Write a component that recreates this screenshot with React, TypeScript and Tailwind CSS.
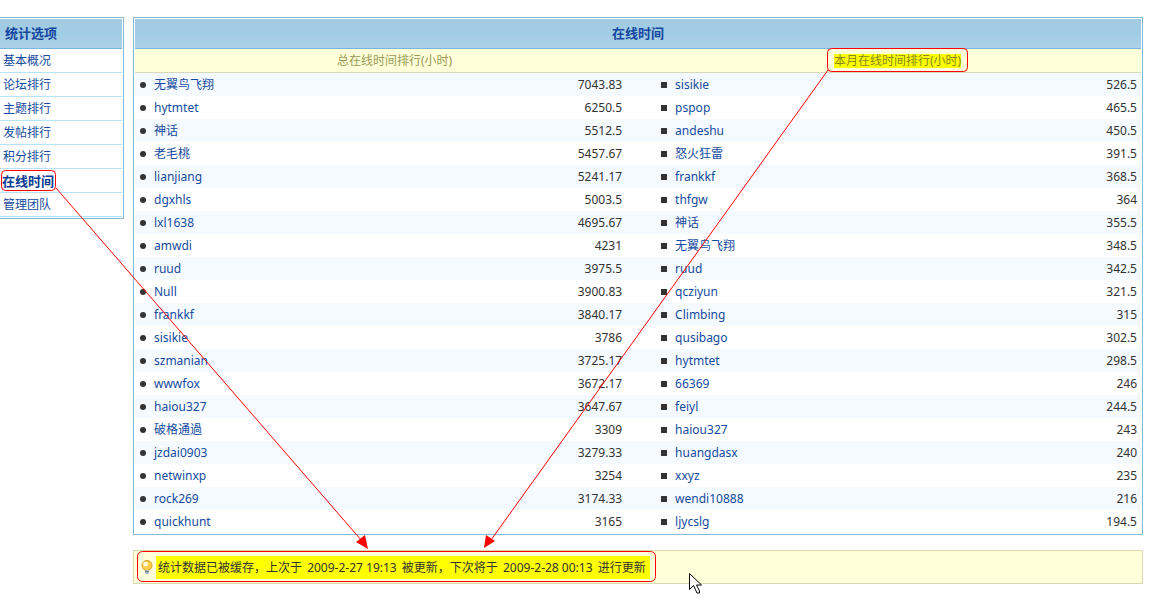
import React from 'react';

interface RankEntry {
  name: string;
  hours: string;
}

const menuItems = ['基本概况', '论坛排行', '主题排行', '发帖排行', '积分排行', '在线时间', '管理团队'];
const activeItem = '在线时间';

const totalRank: RankEntry[] = [
  { name: '无翼鸟飞翔', hours: '7043.83' },
  { name: 'hytmtet', hours: '6250.5' },
  { name: '神话', hours: '5512.5' },
  { name: '老毛桃', hours: '5457.67' },
  { name: 'lianjiang', hours: '5241.17' },
  { name: 'dgxhls', hours: '5003.5' },
  { name: 'lxl1638', hours: '4695.67' },
  { name: 'amwdi', hours: '4231' },
  { name: 'ruud', hours: '3975.5' },
  { name: 'Null', hours: '3900.83' },
  { name: 'frankkf', hours: '3840.17' },
  { name: 'sisikie', hours: '3786' },
  { name: 'szmanian', hours: '3725.17' },
  { name: 'wwwfox', hours: '3672.17' },
  { name: 'haiou327', hours: '3647.67' },
  { name: '破格通過', hours: '3309' },
  { name: 'jzdai0903', hours: '3279.33' },
  { name: 'netwinxp', hours: '3254' },
  { name: 'rock269', hours: '3174.33' },
  { name: 'quickhunt', hours: '3165' },
];

const monthRank: RankEntry[] = [
  { name: 'sisikie', hours: '526.5' },
  { name: 'pspop', hours: '465.5' },
  { name: 'andeshu', hours: '450.5' },
  { name: '怒火狂雷', hours: '391.5' },
  { name: 'frankkf', hours: '368.5' },
  { name: 'thfgw', hours: '364' },
  { name: '神话', hours: '355.5' },
  { name: '无翼鸟飞翔', hours: '348.5' },
  { name: 'ruud', hours: '342.5' },
  { name: 'qcziyun', hours: '321.5' },
  { name: 'Climbing', hours: '315' },
  { name: 'qusibago', hours: '302.5' },
  { name: 'hytmtet', hours: '298.5' },
  { name: '66369', hours: '246' },
  { name: 'feiyl', hours: '244.5' },
  { name: 'haiou327', hours: '243' },
  { name: 'huangdasx', hours: '240' },
  { name: 'xxyz', hours: '235' },
  { name: 'wendi10888', hours: '216' },
  { name: 'ljycslg', hours: '194.5' },
];

const Sidebar: React.FC = () => (
  <nav className="w-[124px] shrink-0 border border-l-0 border-[#86b9d6] pt-px pr-px pb-px">
    <h2 className="h-[30px] border-b border-[#7ab6dc] bg-linear-to-b from-[#a3cbe2] via-[#a0cde4] to-[#aed1e8] pl-[5px] text-[13px] leading-7 font-bold text-[#1546a0]">
      统计选项
    </h2>
    <ul>
      {menuItems.map(item => (
        <li key={item} className="h-6 border-b border-[#b6e2fa] leading-6">
          <a
            href="#"
            className={item === activeItem ? 'pl-[2px] text-[13px] font-bold text-[#0b3b94]' : 'pl-[3px] text-[#154ba0]'}
          >
            {item}
          </a>
        </li>
      ))}
    </ul>
  </nav>
);

const RankTable: React.FC = () => (
  <div className="border border-[#86b9d6] px-px pt-px pb-px">
    <table className="w-full table-fixed border-separate border-spacing-0">
      <colgroup>
        <col className="w-[40%]" />
        <col className="w-[12%]" />
        <col className="w-[36%]" />
        <col className="w-[12%]" />
      </colgroup>
      <thead>
        <tr>
          <th
            colSpan={4}
            className="h-[30px] border-b border-[#7ab6dc] bg-linear-to-b from-[#a3cbe2] via-[#a0cde4] to-[#aed1e8] p-0 pb-px text-[13px] leading-7 font-bold text-[#1546a0]"
          >
            在线时间
          </th>
        </tr>
        <tr className="bg-[#ffffd9] text-[#9a9a55]">
          <th colSpan={2} className="h-6 border-b border-[#d6d9bd] p-0 pr-1 leading-5 font-normal">
            总在线时间排行(小时)
          </th>
          <th colSpan={2} className="h-6 border-b border-[#d6d9bd] p-0 pr-1 leading-5 font-normal text-[#86891b]">
            <span className="inline-block bg-[#ffff00] leading-[14px]">本月在线时间排行(小时)</span>
          </th>
        </tr>
      </thead>
      <tbody>
        {totalRank.map((total, i) => (
          <tr key={total.name} className="odd:bg-[#f5fafe]">
            <td className="h-[23px] p-0 pl-[5px]">
              <div className="flex items-center gap-2">
                <span className="size-[6px] rounded-full bg-[#333333]" />
                <a href="#" className="text-[#154ba0]">{total.name}</a>
              </div>
            </td>
            <td className="p-0 pr-9 text-right">{total.hours}</td>
            <td className="p-0 pl-[3px]">
              <div className="flex items-center gap-2">
                <span className="size-[6px] bg-[#333333]" />
                <a href="#" className="text-[#154ba0]">{monthRank[i].name}</a>
              </div>
            </td>
            <td className="p-0 pr-1 text-right">{monthRank[i].hours}</td>
          </tr>
        ))}
      </tbody>
    </table>
  </div>
);

const BulbIcon: React.FC = () => (
  <svg width="12" height="14" viewBox="0 0 12 14" className="shrink-0">
    <circle cx="6" cy="5.5" r="5" fill="#ffd04a" stroke="#dd9a1c" />
    <ellipse cx="4.5" cy="4" rx="2.5" ry="2.2" fill="#fffbe0" />
    <path d="M4 10h4v3L7 14H5L4 13z" fill="#a6b3c4" />
    <path d="M4 11.5h4" stroke="#6f7b8c" />
  </svg>
);

// Red callouts and the mouse pointer drawn over the page
const Annotations: React.FC = () => (
  <svg width="1157" height="601" viewBox="0 0 1157 601" className="pointer-events-none absolute top-0 left-0">
    <g fill="none" stroke="#ff0000" strokeWidth="1">
      <rect x="1.5" y="170.5" width="54" height="20" rx="4" />
      <rect x="827.5" y="48.5" width="140" height="23" rx="4" />
      <rect x="137.5" y="551.5" width="518" height="30" rx="5" />
      <path d="M56 188L362 541M828 70L491 540" />
    </g>
    <path d="M368 549L356 542L365 535zM484 548L486 535L495 541z" fill="#ff0000" />
    <path d="M689.5 573.5v16l4-4l3.500 7.500h2.500v-2l-3-6h5z" fill="#ffffff" stroke="#000000" />
  </svg>
);

const App: React.FC = () => (
  <div className="relative pt-[17px] pb-[17px] font-['Noto_Sans','Noto_Sans_CJK_SC',sans-serif] text-[12px] leading-5 text-[#333333]">
    <div className="flex items-start gap-[9px] pr-[14px]">
      <Sidebar />
      <main className="min-w-0 flex-1">
        <RankTable />
        <div className="mt-[15px] flex h-[34px] items-center gap-[3px] border border-[#d9d9b0] bg-[#ffffd9] pl-[7px]">
          <BulbIcon />
          <p className="bg-[#ffff00] pr-1 pl-[2px] leading-[23px]">
            统计数据已被缓存，上次于 <time className="px-[2px]">2009-2-27 19:13</time> 被更新，下次将于{' '}
            <time className="px-[2px]">2009-2-28 00:13</time> 进行更新
          </p>
        </div>
      </main>
    </div>
    <Annotations />
  </div>
);

export default App;
